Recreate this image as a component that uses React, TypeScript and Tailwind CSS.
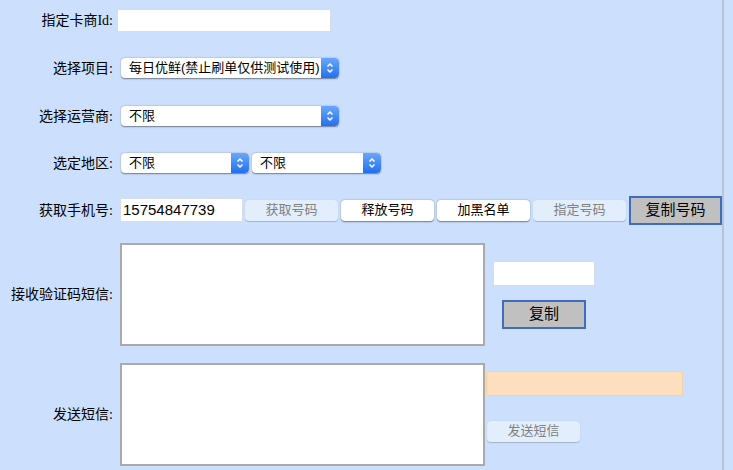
const Arrow = () => (
  <span className="flex h-full w-[18px] items-center justify-center rounded-r-[4px] bg-gradient-to-b from-[#6aa7fb] to-[#1f6ff0]">
    <svg width="8" height="12" viewBox="0 0 8 12" fill="none" stroke="white" strokeWidth="1.5">
      <path d="M1.5 4.5 L4 2 L6.5 4.5" />
      <path d="M1.5 7.5 L4 10 L6.5 7.5" />
    </svg>
  </span>
);

function Select({ text, w }: { text: string; w: string }) {
  return (
    <div className={`flex h-[20px] ${w} items-center overflow-hidden rounded-[4px] bg-white shadow-[0_0.5px_1.5px_rgba(0,0,0,0.45)]`}>
      <span className="flex-1 truncate whitespace-nowrap pl-[8px] text-[13px]">{text}</span>
      <Arrow />
    </div>
  );
}

function Btn({ text, kind }: { text: string; kind: 'off' | 'on' | 'gray' }) {
  const cls =
    kind === 'gray'
      ? 'h-[29px] border-2 border-[#3d6cc0] bg-[#c0c0c0] text-black text-[15px]'
      : kind === 'on'
        ? 'h-[21px] rounded-[4px] bg-white text-black shadow-[0_0.5px_1.5px_rgba(0,0,0,0.45)] text-[13px]'
        : 'h-[21px] rounded-[4px] bg-[#e3eefc] text-[#808080] shadow-[0_0.5px_1px_rgba(0,0,0,0.2)] text-[13px]';
  return <div className={`flex w-[93px] items-center justify-center ${cls}`}>{text}</div>;
}

function Label({ text }: { text: string }) {
  return (
    <div className="w-[116px] shrink-0 pr-[3px] text-right text-[14px] font-serif-cn">{text}</div>
  );
}

export default function App() {
  const serif = { fontFamily: '"Liberation Serif", "Noto Sans CJK SC", serif' };
  return (
    <div
      className="h-[470px] w-[733px] overflow-hidden bg-[#cce0fd] text-black"
      style={{ fontFamily: '"Liberation Sans", "Noto Sans CJK SC", sans-serif' }}
    >
      <div className="h-full w-[724px] border-r-2 border-[#b8c4d4]">
        <div style={serif} className="contents" />
        <div className="flex h-[40px] items-center pt-[0px]" style={serif}>
          <Label text="指定卡商Id:" />
          <div className="ml-[1px] h-[23px] w-[214px] border border-[#d8dde4] bg-white" />
        </div>
        <div className="mt-[8px] flex h-[40px] items-center">
          <div style={serif}><Label text="选择项目:" /></div>
          <div className="ml-[5px]"><Select text="每日优鲜(禁止刷单仅供测试使用)" w="w-[218px]" /></div>
        </div>
        <div className="mt-[8px] flex h-[40px] items-center">
          <div style={serif}><Label text="选择运营商:" /></div>
          <div className="ml-[5px]"><Select text="不限" w="w-[218px]" /></div>
        </div>
        <div className="mt-[7px] flex h-[40px] items-center">
          <div style={serif}><Label text="选定地区:" /></div>
          <div className="ml-[5px] flex gap-[3px]">
            <Select text="不限" w="w-[128px]" />
            <Select text="不限" w="w-[129px]" />
          </div>
        </div>
        <div className="mt-[7px] flex h-[40px] items-center">
          <div style={serif}><Label text="获取手机号:" /></div>
          <div className="ml-[4px] flex items-center h-[24px] w-[125px] border border-[#d8dde4] bg-white pl-[2px] text-[15px]">15754847739</div>
          <div className="ml-[2px] flex items-center gap-[3px]">
            <Btn text="获取号码" kind="off" />
            <Btn text="释放号码" kind="on" />
            <Btn text="加黑名单" kind="on" />
            <Btn text="指定号码" kind="off" />
            <Btn text="复制号码" kind="gray" />
          </div>
        </div>
        <div className="mt-[13px] flex items-center">
          <div style={serif}><Label text="接收验证码短信:" /></div>
          <div className="ml-[4px] h-[103px] w-[365px] border-2 border-[#aaaaaa] bg-white" />
          <div className="ml-[8px] flex flex-col gap-[14px]">
            <div className="h-[25px] w-[102px] border border-[#d8dde4] bg-white" />
            <div className="ml-[9px] flex h-[29px] w-[84px] items-center justify-center border-2 border-[#3d6cc0] bg-[#c0c0c0] text-[15px]">复制</div>
          </div>
        </div>
        <div className="mt-[17px] flex items-center">
          <div style={serif}><Label text="发送短信:" /></div>
          <div className="ml-[4px] h-[103px] w-[365px] border-2 border-[#aaaaaa] bg-white" />
          <div className="ml-[1px] flex flex-col gap-[25px] pb-[17px]">
            <div className="h-[25px] w-[197px] border border-[#f6cfa5] bg-[#fddfc0]" />
            <div className="ml-[1px] flex h-[21px] w-[93px] items-center justify-center rounded-[4px] bg-[#e3eefc] text-[13px] text-[#808080] shadow-[0_0.5px_1px_rgba(0,0,0,0.2)]">发送短信</div>
          </div>
        </div>
      </div>
    </div>
  );
}
